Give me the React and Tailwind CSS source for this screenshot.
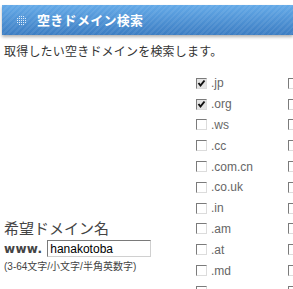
import React from 'react';

const tlds = [
  { tld: '.jp', checked: true },
  { tld: '.org', checked: true },
  { tld: '.ws' },
  { tld: '.cc' },
  { tld: '.com.cn' },
  { tld: '.co.uk' },
  { tld: '.in' },
  { tld: '.am' },
  { tld: '.at' },
  { tld: '.md' },
  { tld: '', more: true },
];

// classic win-style sunken checkbox
const Box = ({ checked }) => (
  <span
    className={`flex h-[11px] w-[11px] shrink-0 items-center justify-center border border-t-[#7b7b7b] border-l-[#7b7b7b] border-r-[#dcdcdc] border-b-[#dcdcdc] ${
      checked ? 'bg-[#e4e4e4]' : 'bg-white'
    }`}
  >
    {checked && (
      <svg width="9" height="9" viewBox="0 0 9 9">
        <path d="M1.5 4 L3.5 6.5 L7.5 1.5" stroke="#111" strokeWidth="2" fill="none" />
      </svg>
    )}
  </span>
);

const DotIcon = () => (
  <svg width="9" height="9" viewBox="0 0 9 9">
    {[0, 1, 2, 3, 4].map((r) =>
      [0, 1, 2, 3, 4].map((c) =>
        Math.abs(r - 2) + Math.abs(c - 2) <= 3 ? (
          <rect key={`${r}-${c}`} x={c * 2} y={r * 2} width="1" height="1" fill="#dcebfb" />
        ) : null
      )
    )}
  </svg>
);

export default function App() {
  return (
    <div className="h-[289px] w-[293px] overflow-hidden bg-white font-['Liberation_Sans','Noto_Sans_CJK_JP',sans-serif] text-[#333]">
      <div className="pl-[2px] pt-[5px]">
        <div className="flex h-[30px] items-center gap-[11px] bg-[repeating-linear-gradient(135deg,rgba(255,255,255,0.07)_0px,rgba(255,255,255,0.07)_2px,transparent_2px,transparent_4px),linear-gradient(#64aae8,#3c7dc2)] pl-[15px] shadow-[0_2px_3px_rgba(0,0,0,0.3)]">
          <DotIcon />
          <span className="text-[13px] font-bold leading-none tracking-[0.3px] text-white">空きドメイン検索</span>
        </div>
      </div>
      <p className="mt-[9px] pl-[4px] text-[12px] leading-[16px] tracking-[0.2px] text-[#333]">取得したい空きドメインを検索します。</p>
      <div className="mt-[13px] flex">
        <div className="flex w-[196px] shrink-0 flex-col pl-[4px] pt-[147px]">
          <div className="text-[15px] leading-[18px] text-[#444]">希望ドメイン名</div>
          <div className="mt-[2px] flex items-center gap-[5px]">
            <span className="font-['DejaVu_Sans',sans-serif] text-[12px] font-bold leading-none tracking-[0.3px] text-[#444]">www.</span>
            <input
              defaultValue="hanakotoba"
              className="h-[17px] w-[104px] border border-t-[#7a7a7a] border-l-[#7a7a7a] border-r-[#d0d0d0] border-b-[#d0d0d0] px-[2px] text-[12px] leading-none text-black outline-none"
            />
          </div>
          <div className="mt-[4px] text-[10px] leading-[12px] text-[#444]">(3-64文字/小文字/半角英数字)</div>
        </div>
        <div className="flex w-[92px] shrink-0 flex-col">
          {tlds.map((d, i) => (
            <div key={i} className="flex h-[20.8px] shrink-0 items-center gap-[4px]">
              <Box checked={d.checked} />
              {!d.more && <span className="text-[12px] text-[#666]">{d.tld}</span>}
            </div>
          ))}
        </div>
        <div className="flex shrink-0 flex-col">
          {tlds.map((d, i) => (
            <div key={i} className="flex h-[20.8px] shrink-0 items-center">
              <Box />
            </div>
          ))}
        </div>
      </div>
    </div>
  );
}
